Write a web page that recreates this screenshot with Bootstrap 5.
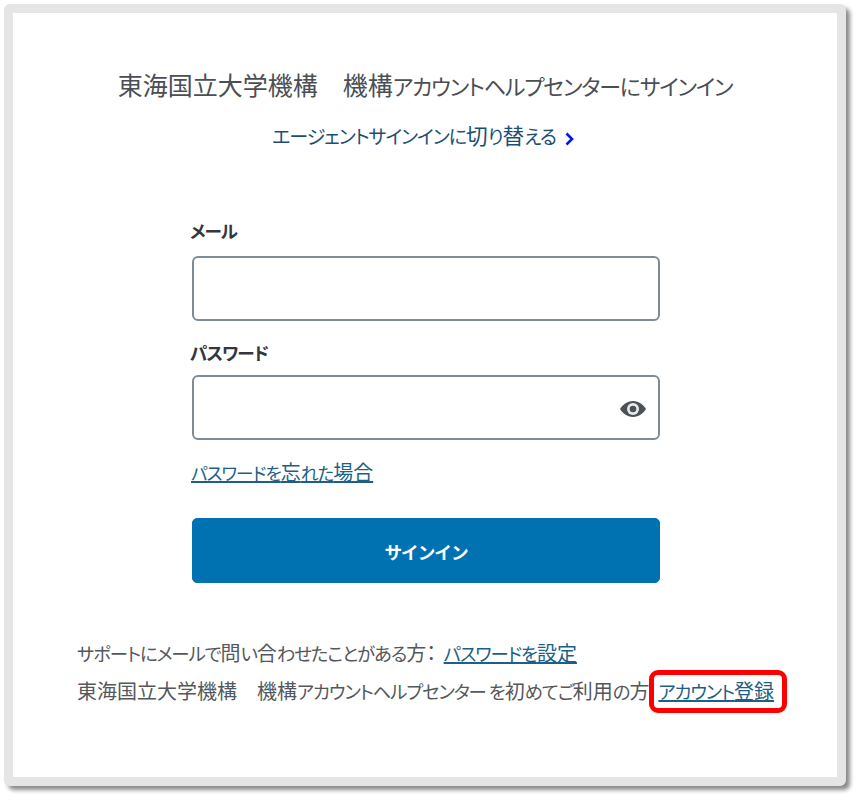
<!DOCTYPE html>
<html lang="ja">
<head>
    <meta charset="UTF-8">
    <meta name="viewport" content="width=device-width, initial-scale=1.0">
    <title>サインイン</title>
    <link href="https://cdn.jsdelivr.net/npm/bootstrap@5.3.0/dist/css/bootstrap.min.css" rel="stylesheet">
    <style>
        html, body { height: 800px; background: #fff; }
        body { font-family: "Noto Sans CJK JP", "Liberation Sans", sans-serif; font-feature-settings: "palt"; color: #4b4f54; padding: 4px 0 0 4px; overflow: hidden; }
        .kn { font-size: .88em; letter-spacing: -.055em; }
        .shot-frame { width: 842px; height: 782px; border: 9px solid #e5e5e5; border-radius: 6px; box-shadow: 4px 4px 4px #8a8a8a; padding-top: 55px; }
        .signin-title { font-size: 25px; line-height: 32px; margin: 0 0 18px; font-weight: 400; color: #4b4f54; }
        .agent-row { padding-right: 4px; }
        .agent-link { font-size: 21.7px; line-height: 32px; color: #1d4f76; }
        .agent-link svg { margin-left: 9px; vertical-align: -2px; }
        .signin-form { width: 468px; margin: 65px auto 0 179px; }
        .field-label { font-size: 20px; line-height: 26px; font-weight: 700; color: #33373b; margin: 0 0 12px -2px; display: block; }
        .field-input { height: 65px; border: 2px solid #7f8b95; border-radius: 6px; background: #fff; }
        .pw-label { margin-top: 18px; margin-bottom: 9px; }
        .eye-icon { right: 13px; top: 25px; }
        .forgot-link { font-size: 20px; line-height: 26px; color: #1d5f86; margin: 19px 0 0 -1px; display: inline-block; }
        .signin-btn { height: 65px; background: #0072b1; border-color: #0072b1; border-radius: 5px; color: #fff; font-size: 20px; font-weight: 700; margin-top: 32px; }
        .foot-text { margin: 51px 0 0 64px; font-size: 20px; line-height: 38px; color: #54585d; white-space: nowrap; }
        .foot-text .kn { font-size: .92em; letter-spacing: -.06em; }
        .foot-text a { color: #1d5f86; }
        .pw-set-link { margin-left: 3px; }
        .reg-box { border: 5px solid #f00; border-radius: 9px; padding: 2px 8px 3px 4px; line-height: 28px; display: inline-block; margin: -6px 0; }
    </style>
</head>
<body>
    <div class="shot-frame bg-white">
        <h1 class="signin-title text-center">東海国立大学機構　機構<span class="kn">アカウントヘルプセンターにサインイン</span></h1>
        <div class="agent-row text-center">
            <a href="#" class="agent-link text-decoration-none"><span class="kn">エージェントサインインに</span>切<span class="kn">り</span>替<span class="kn">える</span><svg width="9" height="14" viewBox="0 0 9 14"><path d="M1.5 1.5 7 7l-5.500 5.500" fill="none" stroke="#0a14e0" stroke-width="2.6"/></svg></a>
        </div>

        <form class="signin-form">
            <label class="field-label" for="mail"><span class="kn">メール</span></label>
            <input type="text" id="mail" class="form-control field-input">

            <label class="field-label pw-label" for="pw"><span class="kn">パスワード</span></label>
            <div class="position-relative">
                <input type="password" id="pw" class="form-control field-input">
                <svg class="eye-icon position-absolute" width="28" height="18" viewBox="0 0 28 18">
                    <path d="M14 1C8 1 3.500 5 1 9c2.500 4 7 8 13 8s10.500-4 13-8c-2.500-4-7-8-13-8z" fill="#4a5157"/>
                    <circle cx="14" cy="9" r="6" fill="#e8eaec"/>
                    <circle cx="14" cy="9" r="3.300" fill="#4a5157"/>
                </svg>
            </div>

            <a href="#" class="forgot-link"><span class="kn">パスワードを</span>忘<span class="kn">れた</span>場合</a>
            <button type="button" class="btn signin-btn w-100"><span class="kn">サインイン</span></button>
        </form>

        <div class="foot-text">
            <div><span class="kn">サポートにメールで</span>問<span class="kn">い</span>合<span class="kn">わせたことがある</span>方： <a href="#" class="pw-set-link"><span class="kn">パスワードを</span>設定</a></div>
            <div>東海国立大学機構　機構<span class="kn">アカウントヘルプセンター を</span>初<span class="kn">めてご</span>利用<span class="kn">の</span>方<span class="reg-box"><a href="#"><span class="kn">アカウント</span>登録</a></span></div>
        </div>
    </div>
    <script src="https://cdn.jsdelivr.net/npm/bootstrap@5.3.0/dist/js/bootstrap.bundle.min.js"></script>
</body>
</html>
